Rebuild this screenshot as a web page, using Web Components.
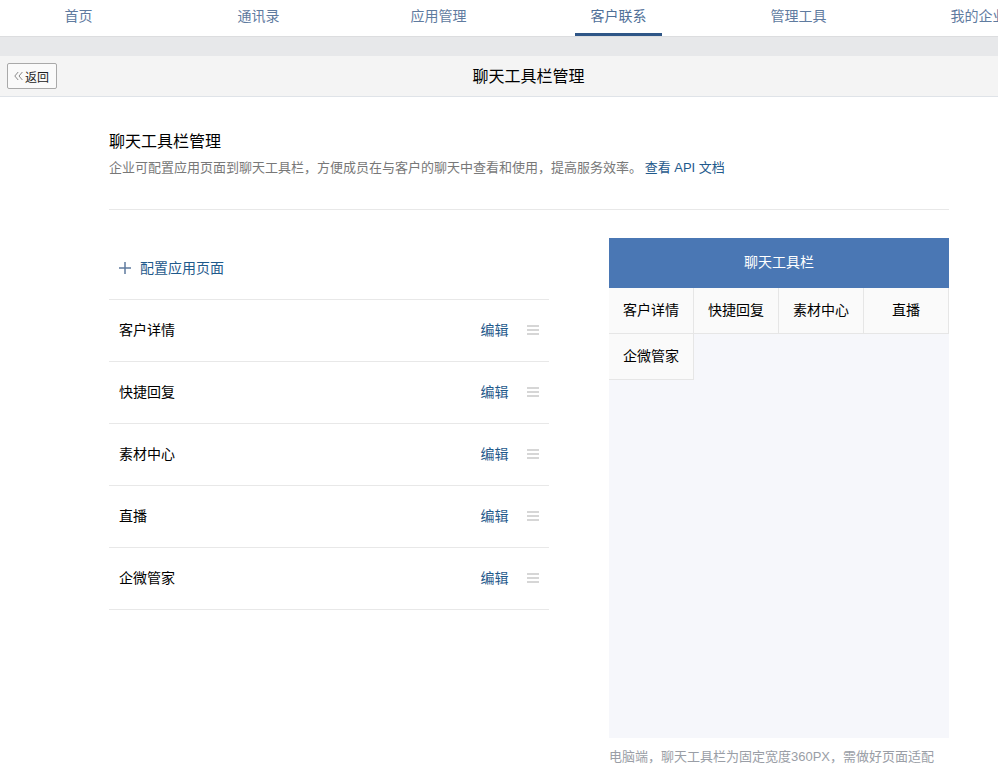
<!DOCTYPE html>
<html lang="zh">
<head>
<meta charset="utf-8">
<title>聊天工具栏管理</title>
<style>
html, body {
    margin: 0;
    padding: 0;
    background: #fff;
    height: 784px;
    overflow: hidden;
    font-family: "Liberation Sans", "Noto Sans CJK SC", sans-serif;
    font-size: 14px;
    color: #000;
}
</style>
</head>
<body>
<app-nav></app-nav>
<back-bar title="聊天工具栏管理"></back-bar>
<page-body></page-body>

<script>
const navTemplate = document.createElement('template')
navTemplate.innerHTML = `
<style>
:host {
    display: block;
    height: 36px;
    background: #fff;
    border-bottom: 1px solid #dcdddf;
    overflow: hidden;
    position: relative;
}
nav {
    display: flex;
    margin-left: -12px;
    width: 1100px;
}
a {
    flex: 0 0 180px;
    display: flex;
    justify-content: center;
    color: #5f7b9f;
    white-space: nowrap;
}
span {
    display: block;
    height: 33px;
    line-height: 32px;
    padding: 0 15px 0 16px;
}
a.active { color: #4f6f98; }
a.active span { border-bottom: 3px solid #2f5687; }
</style>
<nav>
    <a><span>首页</span></a>
    <a><span>通讯录</span></a>
    <a><span>应用管理</span></a>
    <a class="active"><span>客户联系</span></a>
    <a><span>管理工具</span></a>
    <a><span>我的企业</span></a>
</nav>
`

class AppNav extends HTMLElement {
    constructor() {
        super()
        this.attachShadow({ mode: 'open' }).appendChild(navTemplate.content.cloneNode(true))
    }
}
customElements.define('app-nav', AppNav)

const backTemplate = document.createElement('template')
backTemplate.innerHTML = `
<style>
:host {
    display: block;
    margin-top: 19px;
    height: 40px;
    background: #f4f4f4;
    border-bottom: 1px solid #dfe3e8;
    box-shadow: 0 -19px 0 #e7e8ea;
    position: relative;
}
.bar {
    display: flex;
    align-items: center;
    height: 40px;
    padding-left: 7px;
}
button {
    box-sizing: border-box;
    width: 50px;
    height: 26px;
    padding: 0 0 0 6px;
    display: flex;
    align-items: center;
    gap: 2px;
    background: #fafafa;
    border: 1px solid #a9a9a9;
    border-radius: 2px;
    font: inherit;
    font-size: 12px;
    color: #222;
}
svg { width: 9px; height: 10px; }
h1 {
    flex: 1;
    margin: 0 0 0 -57px;
    padding-left: 59px;
    text-align: center;
    font-size: 16px;
    font-weight: normal;
    color: #000;
    line-height: 39px;
    pointer-events: none;
}
</style>
<div class="bar">
    <button>
        <svg viewBox="0 0 9 10" fill="none" stroke="#8a8a8a" stroke-width="1"><path d="M4.2 1 L0.8 5 L4.2 9"/><path d="M8.4 1 L5 5 L8.4 9"/></svg>
        返回
    </button>
    <h1></h1>
</div>
`

class BackBar extends HTMLElement {
    constructor() {
        super()
        this.attachShadow({ mode: 'open' }).appendChild(backTemplate.content.cloneNode(true))
        this.shadowRoot.querySelector('h1').textContent = this.getAttribute('title')
    }
}
customElements.define('back-bar', BackBar)

const rowTemplate = document.createElement('template')
rowTemplate.innerHTML = `
<style>
:host {
    display: flex;
    align-items: center;
    box-sizing: border-box;
    height: 62px;
    padding: 0 10px 1px;
    border-bottom: 1px solid #e8e8e8;
}
.name { flex: 1; color: #000; margin-top: -2px; }
.edit { color: #1f5a8c; margin-right: 18.5px; margin-top: -2px; }
.drag { display: block; width: 12px; height: 10px; }
</style>
<span class="name"><slot></slot></span>
<span class="edit">编辑</span>
<svg class="drag" viewBox="0 0 12 10"><rect width="12" height="2" y="0" fill="#d6d6d6"/><rect width="12" height="2" y="4" fill="#d6d6d6"/><rect width="12" height="2" y="8" fill="#d6d6d6"/></svg>
`

class ToolRow extends HTMLElement {
    constructor() {
        super()
        this.attachShadow({ mode: 'open' }).appendChild(rowTemplate.content.cloneNode(true))
    }
}
customElements.define('tool-row', ToolRow)

const previewTemplate = document.createElement('template')
previewTemplate.innerHTML = `
<style>
:host { display: block; width: 340px; }
.box {
    height: 500px;
    background: #f6f7fb;
}
.title {
    height: 50px;
    line-height: 49px;
    text-align: center;
    color: #fff;
    background: #4a77b4;
}
.cells {
    display: grid;
    grid-template-columns: repeat(4, 85px);
    grid-auto-rows: 46px;
}
.cells div {
    box-sizing: border-box;
    display: flex;
    align-items: center;
    justify-content: center;
    padding-bottom: 4px;
    background: #fafafa;
    border-right: 1px solid #e6e6e6;
    border-bottom: 1px solid #e6e6e6;
}
p {
    margin: 10px 0 0;
    font-size: 13px;
    color: #9a9ea6;
    line-height: 17px;
}
</style>
<div class="box">
    <div class="title">聊天工具栏</div>
    <div class="cells"></div>
</div>
<p>电脑端，聊天工具栏为固定宽度360PX，需做好页面适配</p>
`

class ToolbarPreview extends HTMLElement {
    constructor() {
        super()
        this.attachShadow({ mode: 'open' }).appendChild(previewTemplate.content.cloneNode(true))
    }

    setTools(names) {
        const cells = this.shadowRoot.querySelector('.cells')
        names.forEach((name) => {
            const cell = document.createElement('div')
            cell.textContent = name
            cells.appendChild(cell)
        })
    }
}
customElements.define('toolbar-preview', ToolbarPreview)

const tools = ['客户详情', '快捷回复', '素材中心', '直播', '企微管家']

const bodyTemplate = document.createElement('template')
bodyTemplate.innerHTML = `
<style>
:host {
    display: block;
    padding: 35px 49px 0 109px;
}
h2 {
    margin: 0;
    font-size: 16px;
    font-weight: normal;
    line-height: 20px;
    color: #000;
}
.desc {
    margin: 7px 0 0;
    font-size: 13px;
    color: #787878;
    line-height: 18px;
}
.desc a { color: #1f5a8c; margin-left: -1px; }
hr {
    border: 0;
    border-top: 1px solid #e8e8e8;
    margin: 32px 0 28px;
}
.main {
    display: flex;
    justify-content: space-between;
}
.list { width: 440px; }
.add {
    display: flex;
    align-items: center;
    box-sizing: border-box;
    height: 62px;
    padding: 0 0 1px 10px;
    border-bottom: 1px solid #e8e8e8;
    color: #1f5a8c;
}
.add span { margin-top: -2px; }
.add svg { width: 12px; height: 12px; margin-right: 9px; }
</style>
<h2>聊天工具栏管理</h2>
<p class="desc">企业可配置应用页面到聊天工具栏，方便成员在与客户的聊天中查看和使用，提高服务效率。 <a>查看 API 文档</a></p>
<hr>
<div class="main">
    <div class="list">
        <div class="add">
            <svg viewBox="0 0 12 12"><rect x="5.25" width="1.5" height="12" fill="#5f7b9f"/><rect y="5.25" width="12" height="1.5" fill="#5f7b9f"/></svg>
            <span>配置应用页面</span>
        </div>
        <div class="rows"></div>
    </div>
    <toolbar-preview></toolbar-preview>
</div>
`

class PageBody extends HTMLElement {
    constructor() {
        super()
        this.attachShadow({ mode: 'open' }).appendChild(bodyTemplate.content.cloneNode(true))
        const rows = this.shadowRoot.querySelector('.rows')
        tools.forEach((name) => {
            const row = document.createElement('tool-row')
            row.textContent = name
            rows.appendChild(row)
        })
        this.shadowRoot.querySelector('toolbar-preview').setTools(tools)
    }
}
customElements.define('page-body', PageBody)
</script>
</body>
</html>
